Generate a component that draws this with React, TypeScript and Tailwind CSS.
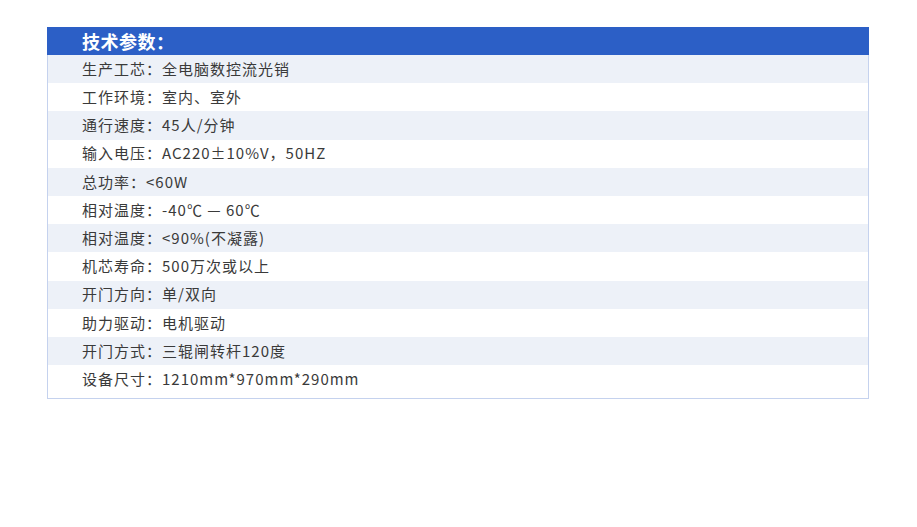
const rows: [string, string][] = [
  ["生产工芯", "全电脑数控流光销"],
  ["工作环境", "室内、室外"],
  ["通行速度", "45人/分钟"],
  ["输入电压", "AC220±10%V，50HZ"],
  ["总功率", "<60W"],
  ["相对温度", "-40℃ — 60℃"],
  ["相对温度", "<90%(不凝露)"],
  ["机芯寿命", "500万次或以上"],
  ["开门方向", "单/双向"],
  ["助力驱动", "电机驱动"],
  ["开门方式", "三辊闸转杆120度"],
  ["设备尺寸", "1210mm*970mm*290mm"],
];

export default function App() {
  return (
    <div
      className="w-[917px] h-[527px] bg-white pt-[27px] pl-[47px]"
      style={{ fontFamily: '"Noto Sans CJK SC", "Noto Sans", sans-serif' }}
    >
      <div className="w-[822px] border-x border-b border-[#c5d2ee] pb-[5px]">
        <div className="h-[28px] -mx-px bg-[#2c5fc6] flex items-center pl-[35px] text-white text-[18px] font-bold tracking-[0.5px]">
          技术参数：
        </div>
        {rows.map(([k, v], i) => (
          <div
            key={i}
            className={`h-[28.2px] flex items-center pl-[34px] text-[15px] text-[#3a3a3a] tracking-[1px] ${
              i % 2 === 0 ? "bg-[#edf1f8]" : "bg-white"
            }`}
          >
            <span>{k}：</span>
            <span>{v}</span>
          </div>
        ))}
      </div>
    </div>
  );
}
